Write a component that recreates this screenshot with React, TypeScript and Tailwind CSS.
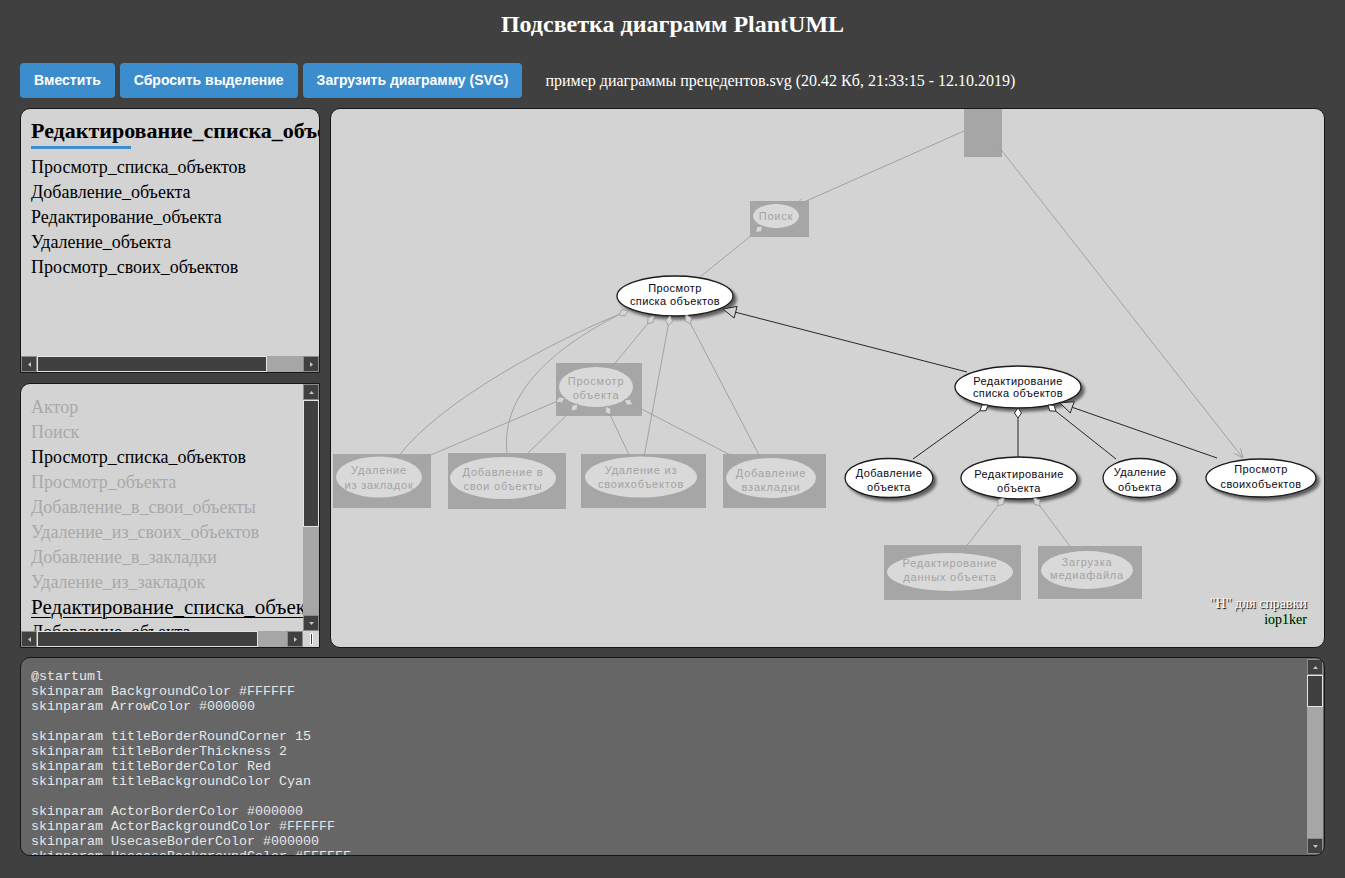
import React from 'react';

const SERIF = "font-['Liberation_Serif','Times_New_Roman',serif]";
const SANS = "font-['Liberation_Sans',Arial,sans-serif]";

type Dir = 'up' | 'down' | 'left' | 'right';

const arrowPoints: Record<Dir, string> = {
  up: '1,5 3.5,2 6,5',
  down: '1,2 3.5,5 6,2',
  left: '5,1 2,3.5 5,6',
  right: '2,1 5,3.5 2,6',
};

function ScrollButton({ dir }: { dir: Dir }) {
  return (
    <div className="flex h-[16px] w-[16px] shrink-0 items-center justify-center border border-[#8c8c8c] bg-[#404040]">
      <svg width="7" height="7" viewBox="0 0 7 7">
        <polygon points={arrowPoints[dir]} fill="#c4c4c4" />
      </svg>
    </div>
  );
}

function HScroll({ thumb }: { thumb: string }) {
  return (
    <div className="flex h-[16px] flex-1">
      <ScrollButton dir="left" />
      <div className={`${thumb} shrink-0 border border-[#e4e4e4] bg-[#404040]`} />
      <div className="flex-1 bg-[#a6a6a6]" />
      <ScrollButton dir="right" />
    </div>
  );
}

function VScroll({ thumb }: { thumb: string }) {
  return (
    <div className="flex w-[16px] shrink-0 flex-col">
      <ScrollButton dir="up" />
      <div className={`${thumb} shrink-0 border border-[#e4e4e4] bg-[#404040]`} />
      <div className="flex-1 bg-[#a6a6a6]" />
      <ScrollButton dir="down" />
    </div>
  );
}

// --- diagram helpers -------------------------------------------------------

function unit(x1: number, y1: number, x2: number, y2: number) {
  const dx = x2 - x1;
  const dy = y2 - y1;
  const l = Math.hypot(dx, dy) || 1;
  return [dx / l, dy / l];
}

function openArrow(x1: number, y1: number, x2: number, y2: number, len = 9, w = 4) {
  const [ux, uy] = unit(x1, y1, x2, y2);
  const bx = x2 - ux * len;
  const by = y2 - uy * len;
  return `${bx - uy * w},${by + ux * w} ${x2},${y2} ${bx + uy * w},${by - ux * w}`;
}

function triangle(x1: number, y1: number, x2: number, y2: number, len = 13, w = 6) {
  const [ux, uy] = unit(x1, y1, x2, y2);
  const bx = x2 - ux * len;
  const by = y2 - uy * len;
  return {
    points: `${bx - uy * w},${by + ux * w} ${x2},${y2} ${bx + uy * w},${by - ux * w}`,
    base: [bx, by] as const,
  };
}

function diamond(x: number, y: number, tx: number, ty: number, len = 10, w = 3.5) {
  const [ux, uy] = unit(x, y, tx, ty);
  const mx = x + (ux * len) / 2;
  const my = y + (uy * len) / 2;
  const ex = x + ux * len;
  const ey = y + uy * len;
  return {
    points: `${x},${y} ${mx - uy * w},${my + ux * w} ${ex},${ey} ${mx + uy * w},${my - ux * w}`,
    end: [ex, ey] as const,
  };
}

type Node = {
  cx: number;
  cy: number;
  rx: number;
  ry: number;
  lines: string[];
  ys: number[];
  box?: [number, number, number, number];
};

const grayNodes: Node[] = [
  { box: [750, 201, 59, 36], cx: 776, cy: 216, rx: 23, ry: 12, lines: ['Поиск'], ys: [220] },
  { box: [556, 363, 86, 53], cx: 596, cy: 387, rx: 37, ry: 20, lines: ['Просмотр', 'объекта'], ys: [385, 399] },
  { box: [333, 454, 98, 54], cx: 379, cy: 477, rx: 43, ry: 20.5, lines: ['Удаление', 'из закладок'], ys: [474, 489] },
  { box: [448, 453, 118, 56], cx: 503, cy: 478, rx: 53, ry: 21, lines: ['Добавление в', 'свои объекты'], ys: [476, 490] },
  { box: [581, 454, 125, 54], cx: 641, cy: 477, rx: 56, ry: 20.5, lines: ['Удаление из', 'своихобъектов'], ys: [474, 488] },
  { box: [723, 454, 103, 54], cx: 771, cy: 478, rx: 45, ry: 20, lines: ['Добавление', 'взакладки'], ys: [477, 491] },
  { box: [884, 545, 137, 55], cx: 950, cy: 572, rx: 63, ry: 19, lines: ['Редактирование', 'данных объекта'], ys: [567, 581] },
  { box: [1038, 546, 104, 53], cx: 1087, cy: 570, rx: 46, ry: 19, lines: ['Загрузка', 'медиафайла'], ys: [566, 579] },
];

const whiteNodes: Node[] = [
  { cx: 675, cy: 296, rx: 58, ry: 20, lines: ['Просмотр', 'списка объектов'], ys: [292, 305] },
  { cx: 1018, cy: 387, rx: 63, ry: 21, lines: ['Редактирование', 'списка объектов'], ys: [385, 397] },
  { cx: 889, cy: 478, rx: 44, ry: 19.5, lines: ['Добавление', 'объекта'], ys: [477, 491] },
  { cx: 1019, cy: 478, rx: 58, ry: 21, lines: ['Редактирование', 'объекта'], ys: [478, 492] },
  { cx: 1140, cy: 478, rx: 37, ry: 19.5, lines: ['Удаление', 'объекта'], ys: [476, 491] },
  { cx: 1261, cy: 478, rx: 55, ry: 19, lines: ['Просмотр', 'своихобъектов'], ys: [473, 488] },
];

type Agg = { x: number; y: number; tx: number; ty: number };

const grayAggs: Agg[] = [
  { x: 763, y: 226, tx: 700, ty: 277 },
  { x: 654, y: 316, tx: 612, ty: 367 },
  { x: 670, y: 316, tx: 644, ty: 457 },
  { x: 686, y: 315, tx: 760, ty: 457 },
  { x: 565, y: 398, tx: 412, ty: 463 },
  { x: 578, y: 404, tx: 524, ty: 457 },
  { x: 606, y: 406, tx: 630, ty: 457 },
  { x: 624, y: 400, tx: 742, ty: 461 },
  { x: 1004, y: 498, tx: 965, ty: 548 },
  { x: 1034, y: 498, tx: 1072, ty: 549 },
];

const darkAggs: Agg[] = [
  { x: 988, y: 405, tx: 913, ty: 459 },
  { x: 1018, y: 408, tx: 1018, ty: 457 },
  { x: 1048, y: 405, tx: 1116, ty: 459 },
];

function Diagram() {
  const gen1 = triangle(967, 372, 723, 309);
  const gen2 = triangle(1217, 458, 1060, 403);
  const curveDiamond = diamond(628, 311, 560, 338);

  return (
    <svg className="absolute inset-0 h-full w-full" viewBox="0 0 993 538">
      <defs>
        <filter id="shadow" x="-20%" y="-20%" width="150%" height="160%">
          <feDropShadow dx="3" dy="3" stdDeviation="1.6" floodColor="#000" floodOpacity="0.55" />
        </filter>
      </defs>
      <g transform="translate(-331,-109)">
        {/* actor, drawn as a plain grey block */}
        <rect x="964" y="100" width="38" height="57" fill="#a6a6a6" />
        {grayNodes.map((n, i) =>
          n.box ? <rect key={i} x={n.box[0]} y={n.box[1]} width={n.box[2]} height={n.box[3]} fill="#a6a6a6" /> : null,
        )}

        {/* grey links */}
        <g stroke="#a2a2a2" strokeWidth="1" fill="none">
          <line x1="964" y1="131" x2="795" y2="206" />
          <polyline points={openArrow(964, 131, 795, 206)} />
          <line x1="995" y1="142" x2="1243" y2="458" />
          <polyline points={openArrow(995, 142, 1243, 458)} />
          <path d={`M${curveDiamond.end[0]},${curveDiamond.end[1]} C 560,338 440,400 398,457`} />
          <path d={`M${curveDiamond.end[0]},${curveDiamond.end[1]} C 560,345 500,390 507,453`} />
          {grayAggs.map((a, i) => {
            const d = diamond(a.x, a.y, a.tx, a.ty);
            return <line key={i} x1={d.end[0]} y1={d.end[1]} x2={a.tx} y2={a.ty} />;
          })}
        </g>

        {/* black links */}
        <g stroke="#262626" strokeWidth="1" fill="none">
          <line x1="967" y1="372" x2={gen1.base[0]} y2={gen1.base[1]} />
          <line x1="1217" y1="458" x2={gen2.base[0]} y2={gen2.base[1]} />
          {darkAggs.map((a, i) => {
            const d = diamond(a.x, a.y, a.tx, a.ty);
            return <line key={i} x1={d.end[0]} y1={d.end[1]} x2={a.tx} y2={a.ty} />;
          })}
        </g>

        {grayNodes.map((n, i) => (
          <g key={i}>
            <ellipse cx={n.cx} cy={n.cy} rx={n.rx} ry={n.ry} fill="#d9d9d9" />
            {n.lines.map((t, j) => (
              <text
                key={j}
                x={n.cx}
                y={n.ys[j]}
                textAnchor="middle"
                fontFamily="Liberation Sans, Arial, sans-serif"
                fontSize="11"
                letterSpacing="0.8"
                fill="#a3a3a3"
              >
                {t}
              </text>
            ))}
          </g>
        ))}

        {whiteNodes.map((n, i) => (
          <g key={i}>
            <ellipse
              cx={n.cx}
              cy={n.cy}
              rx={n.rx}
              ry={n.ry}
              fill="#ffffff"
              stroke="#1a1a1a"
              strokeWidth="1.3"
              filter="url(#shadow)"
            />
            {n.lines.map((t, j) => (
              <text
                key={j}
                x={n.cx}
                y={n.ys[j]}
                textAnchor="middle"
                fontFamily="Liberation Sans, Arial, sans-serif"
                fontSize="11"
                letterSpacing="0.4"
                fill="#0a0a14"
              >
                {t}
              </text>
            ))}
          </g>
        ))}

        {/* markers */}
        <polygon points={curveDiamond.points} fill="#d6d6d6" stroke="#a2a2a2" strokeWidth="1" />
        {grayAggs.map((a, i) => (
          <polygon key={i} points={diamond(a.x, a.y, a.tx, a.ty).points} fill="#d6d6d6" stroke="#a2a2a2" strokeWidth="1" />
        ))}
        {darkAggs.map((a, i) => (
          <polygon key={i} points={diamond(a.x, a.y, a.tx, a.ty).points} fill="#ffffff" stroke="#262626" strokeWidth="1" />
        ))}
        <polygon points={gen1.points} fill="#d3d3d3" stroke="#262626" strokeWidth="1" />
        <polygon points={gen2.points} fill="#d3d3d3" stroke="#262626" strokeWidth="1" />
      </g>
    </svg>
  );
}

const topItems = [
  'Просмотр_списка_объектов',
  'Добавление_объекта',
  'Редактирование_объекта',
  'Удаление_объекта',
  'Просмотр_своих_объектов',
];

const treeItems: { text: string; tone: 'gray' | 'black' | 'current' }[] = [
  { text: 'Актор', tone: 'gray' },
  { text: 'Поиск', tone: 'gray' },
  { text: 'Просмотр_списка_объектов', tone: 'black' },
  { text: 'Просмотр_объекта', tone: 'gray' },
  { text: 'Добавление_в_свои_объекты', tone: 'gray' },
  { text: 'Удаление_из_своих_объектов', tone: 'gray' },
  { text: 'Добавление_в_закладки', tone: 'gray' },
  { text: 'Удаление_из_закладок', tone: 'gray' },
  { text: 'Редактирование_списка_объектов', tone: 'current' },
  { text: 'Добавление_объекта', tone: 'black' },
  { text: 'Редактирование_объекта', tone: 'black' },
];

const codeLines = [
  '@startuml',
  'skinparam BackgroundColor #FFFFFF',
  'skinparam ArrowColor #000000',
  '',
  'skinparam titleBorderRoundCorner 15',
  'skinparam titleBorderThickness 2',
  'skinparam titleBorderColor Red',
  'skinparam titleBackgroundColor Cyan',
  '',
  'skinparam ActorBorderColor #000000',
  'skinparam ActorBackgroundColor #FFFFFF',
  'skinparam UsecaseBorderColor #000000',
  'skinparam UsecaseBackgroundColor #FFFFFF',
  'skinparam UsecaseFontColor #000000',
];

export default function App() {
  return (
    <div className={`min-h-screen bg-[#404040] pb-[22px] ${SERIF}`}>
      <h1 className="pt-[10px] text-center text-[24px] font-bold leading-[28px] text-white">Подсветка диаграмм PlantUML</h1>

      <div className="mt-[25px] flex items-center gap-[5px] px-[20px]">
        {['Вместить', 'Сбросить выделение', 'Загрузить диаграмму (SVG)'].map((label) => (
          <button
            key={label}
            type="button"
            className={`h-[35px] rounded-[4px] bg-[#3c8dcd] px-[14px] text-[14px] font-bold text-white ${SANS}`}
          >
            {label}
          </button>
        ))}
        <span className="ml-[18px] text-[16px] text-white">
          пример диаграммы прецедентов.svg (20.42 Кб, 21:33:15 - 12.10.2019)
        </span>
      </div>

      <div className="mt-[10px] flex gap-[10px] px-[20px]">
        <div className="flex w-[300px] shrink-0 flex-col gap-[10px]">
          <div className="flex h-[265px] flex-col overflow-hidden rounded-t-[10px] border border-[#161616] bg-[#d3d3d3]">
            <div className="flex-1 overflow-hidden whitespace-nowrap pl-[10px] pt-[9px]">
              <div className="text-[22px] font-bold leading-[25px] text-black">Редактирование_списка_объектов</div>
              <div className="mt-[3px] h-[3px] w-[100px] bg-[#3c8dcd]" />
              <div className="mt-[6px] text-[18px] leading-[25px] text-black">
                {topItems.map((t) => (
                  <div key={t}>{t}</div>
                ))}
              </div>
            </div>
            <div className="flex">
              <HScroll thumb="w-[230px]" />
            </div>
          </div>

          <div className="flex h-[265px] flex-col overflow-hidden rounded-tl-[10px] border border-[#161616] bg-[#d3d3d3]">
            <div className="flex min-h-0 flex-1">
              <div className="min-w-0 flex-1 overflow-hidden whitespace-nowrap pl-[10px] pt-[11px] leading-[25px]">
                {treeItems.map((item) => (
                  <div
                    key={item.text}
                    className={
                      item.tone === 'gray'
                        ? 'text-[18px] text-[#a9a9a9]'
                        : item.tone === 'black'
                          ? 'text-[18px] text-black'
                          : 'text-[21px] text-black underline decoration-1 underline-offset-[3px]'
                    }
                  >
                    {item.text}
                  </div>
                ))}
              </div>
              <VScroll thumb="h-[127px]" />
            </div>
            <div className="flex">
              <HScroll thumb="w-[221px]" />
              <div className="flex h-[16px] w-[16px] items-center justify-center bg-[#d3d3d3]">
                <div className="h-[12px] w-[3px] border border-white bg-[#404040]" />
              </div>
            </div>
          </div>
        </div>

        <div className="relative h-[540px] flex-1 overflow-hidden rounded-[10px] border border-[#161616] bg-[#d3d3d3]">
          <Diagram />
          <div className="absolute bottom-[19px] right-[17px] text-right text-[14px] leading-[16px]">
            <div className="text-white [text-shadow:1px_1px_1px_#000]">"H" для справки</div>
            <div className="text-black [text-shadow:0_0_2px_#8aff8a]">iop1ker</div>
          </div>
        </div>
      </div>

      <div className="mx-[20px] mt-[9px] flex h-[199px] overflow-hidden rounded-[10px] border border-[#161616] bg-[#666666]">
        <pre className="min-w-0 flex-1 overflow-hidden pl-[10px] pt-[11px] font-['Liberation_Mono','Courier_New',monospace] text-[13.33px] leading-[15px] text-[#e8e8e8]">
          {codeLines.join('\n')}
        </pre>
        <div className="flex py-[1px] pr-[1px]">
          <VScroll thumb="h-[32px]" />
        </div>
      </div>
    </div>
  );
}
